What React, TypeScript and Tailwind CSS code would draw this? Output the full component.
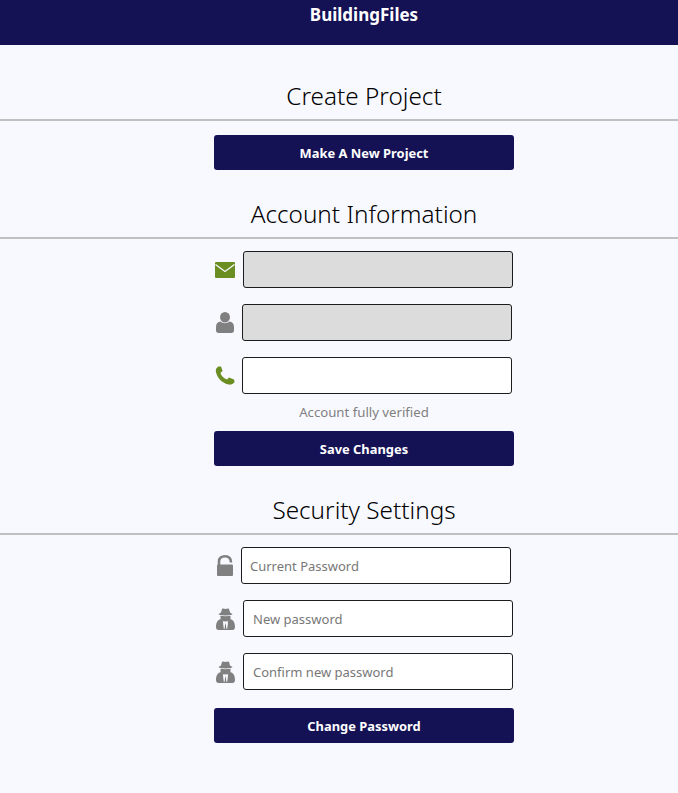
import type { ReactNode } from "react";

const font = "font-['Noto_Sans',sans-serif]";

function Heading({ children, top }: { children: ReactNode; top: string }) {
  return (
    <div className={`${top} h-[42px] border-b-2 border-[#c0c0c0] flex items-start justify-center`}>
      <h2 className="text-[24.3px] leading-[34px] text-black font-light">{children}</h2>
    </div>
  );
}

function Btn({ children, className = "" }: { children: ReactNode; className?: string }) {
  return (
    <button className={`w-[300px] h-[35px] pt-[2px] rounded-[3px] bg-[#141155] text-white text-[12.9px] font-bold flex items-center justify-center ${className}`}>
      {children}
    </button>
  );
}

function Row({
  icon,
  left,
  bg = "bg-white",
  pad = "px-2",
  placeholder,
  className = "",
}: {
  icon: ReactNode;
  left: string;
  bg?: string;
  pad?: string;
  placeholder?: string;
  className?: string;
}) {
  return (
    <div className={`w-[300px] h-[37px] flex items-center ${className}`}>
      <div className="w-[22px] flex items-center justify-center shrink-0">{icon}</div>
      <input
        placeholder={placeholder}
        className={`${left} ${pad} w-[270px] h-[37px] rounded-[3px] border border-[#1c1c1c] ${bg} text-[13px] text-black placeholder:text-[#777777] outline-none`}
      />
    </div>
  );
}

function EnvelopeIcon() {
  return (
    <svg viewBox="0 0 20 16" className="w-[20px] h-[16px]">
      <rect width="20" height="16" rx="1" fill="#6b8e23" />
      <path d="M0.5 2.5 L10 9.5 L19.5 2.5" fill="none" stroke="#f8f9ff" strokeWidth="1.3" />
    </svg>
  );
}

function UserIcon() {
  return (
    <svg viewBox="0 0 18 21" className="w-[18px] h-[21px]">
      <g fill="#808080">
        <ellipse cx="9" cy="5.3" rx="5" ry="5.3" />
        <path d="M0 18.5 V15 C0 11.5 2 9.8 4.5 9.6 C7 11.8 11 11.8 13.5 9.6 C16 9.8 18 11.5 18 15 V18.5 C18 20 17 21 15.5 21 H2.5 C1 21 0 20 0 18.5 Z" />
      </g>
    </svg>
  );
}

function PhoneIcon() {
  return (
    <svg viewBox="0 0 20 19" className="w-[20px] h-[19px]">
      <path
        fill="#6b8e23"
        d="M3.5 0.4 L6 0.4 L7.6 5 L5.4 7 C6.4 10 9 12.5 12 13.5 L14 11.5 L19 13.5 L19.6 16 C18 18 16 18.9 14 18.6 C7 17.5 1.5 11 0.8 5 C0.6 3 2 1 3.5 0.4 Z"
      />
    </svg>
  );
}

function UnlockIcon() {
  return (
    <svg viewBox="0 0 16 21" className="w-[16px] h-[21px]">
      <rect y="9.5" width="16" height="11.5" rx="1" fill="#808080" />
      <path
        d="M2 10 V6.5 C2 3 4.5 1.3 8 1.3 C11.5 1.3 14 3 14 7.5"
        fill="none"
        stroke="#808080"
        strokeWidth="2.6"
      />
    </svg>
  );
}

function SecretIcon() {
  return (
    <svg viewBox="0 0 19 22" className="w-[19px] h-[22px]">
      <g fill="#808080">
        <path d="M5 4.5 L6 0.8 Q7 0 9.5 0.9 Q12 0 13 0.8 L14 4.5 L16.5 6 Q16.5 7.2 9.5 7.4 Q2.5 7.2 2.5 6 Z" />
        <path d="M4.5 7.8 Q9.5 8.6 14.5 7.8 V10.5 Q14 13.5 9.5 13.5 Q5 13.5 4.5 10.5 Z" />
        <path d="M0 19 C0 14.5 1.5 12 4.8 11 L7 13 L8.2 21 L9.5 15 L10.8 21 L12 13 L14.2 11 C17.5 12 19 14.5 19 19 C19 21 18 22 16.5 22 H2.5 C1 22 0 21 0 19 Z" />
      </g>
      <path d="M7.2 14 H8.8 L8.4 21 H7.8 Z M10.2 14 H11.8 L11.2 21 H10.6 Z" fill="#f8f9ff" />
    </svg>
  );
}

export default function App() {
  return (
    <div className="w-[678px] h-[793px] overflow-hidden">
      <div className={`${font} w-[728px] h-[793px] bg-[#f8f9ff] flex flex-col`}>
        <header className="h-[45px] bg-[#141155] flex justify-center shrink-0">
          <span className="text-white text-[17px] font-bold leading-[30px]">BuildingFiles</span>
        </header>
        <Heading top="mt-[34px]">Create Project</Heading>
        <div className="flex flex-col items-center pt-[14px]">
          <Btn>Make A New Project</Btn>
        </div>
        <Heading top="mt-[27px]">Account Information</Heading>
        <div className="flex flex-col items-center pt-[12px]">
          <Row icon={<EnvelopeIcon />} left="ml-[7px]" bg="bg-[#dcdcdc]" />
          <Row className="mt-[16px]" icon={<UserIcon />} left="ml-[6px]" bg="bg-[#dcdcdc]" />
          <Row className="mt-[16px]" icon={<PhoneIcon />} left="ml-[6px]" />
          <p className="mt-[9px] text-[13.2px] leading-[18px] text-[#808080]">Account fully verified</p>
          <Btn className="mt-[10px]">Save Changes</Btn>
        </div>
        <Heading top="mt-[27px]">Security Settings</Heading>
        <div className="flex flex-col items-center pt-[12px]">
          <Row icon={<UnlockIcon />} left="ml-[5px]" placeholder="Current Password" />
          <Row className="mt-[16px]" icon={<SecretIcon />} left="ml-[7px]" pad="px-[9px]" placeholder="New password" />
          <Row className="mt-[16px]" icon={<SecretIcon />} left="ml-[7px]" pad="px-[9px]" placeholder="Confirm new password" />
          <Btn className="mt-[18px]">Change Password</Btn>
        </div>
      </div>
    </div>
  );
}
